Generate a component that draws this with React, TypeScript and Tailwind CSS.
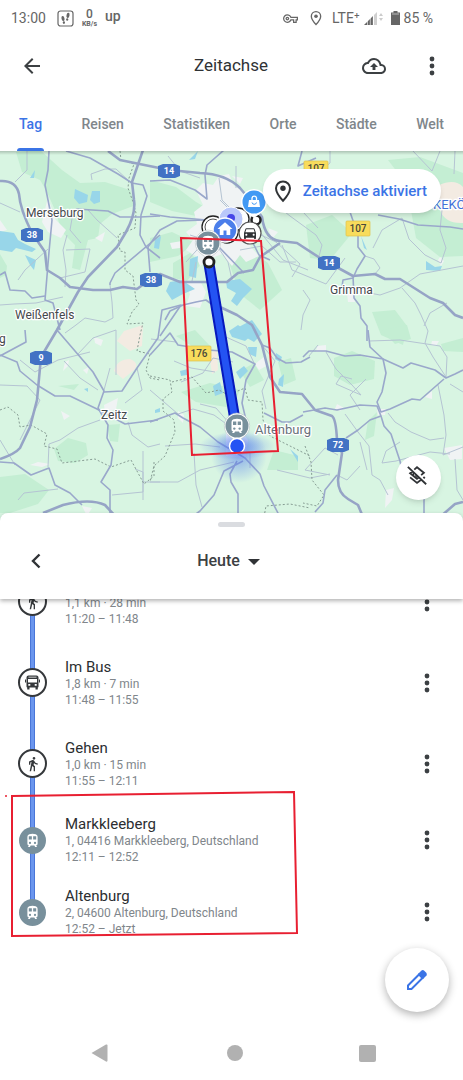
import React, { useState } from 'react';
import {
  MdArrowBack,
  MdDirectionsCar,
  MdDirectionsWalk,
  MdHome,
  MdOutlineBackup,
  MdOutlineVpnKey,
} from 'react-icons/md';

const tabs = ['Tag', 'Reisen', 'Statistiken', 'Orte', 'Städte', 'Welt'];

const entries = [
  { kind: 'walk', title: 'Gehen', detail: '1,1 km · 28 min', time: '11:20 – 11:48' },
  { kind: 'bus', title: 'Im Bus', detail: '1,8 km · 7 min', time: '11:48 – 11:55' },
  { kind: 'walk', title: 'Gehen', detail: '1,0 km · 15 min', time: '11:55 – 12:11' },
  { kind: 'place', title: 'Markkleeberg', detail: '1, 04416 Markkleeberg, Deutschland', time: '12:11 – 12:52' },
  { kind: 'place', title: 'Altenburg', detail: '2, 04600 Altenburg, Deutschland', time: '12:52 – Jetzt' },
];

const Dots = () => (
  <svg width="6" height="20" viewBox="0 0 6 20" fill="#3c4043">
    <circle cx="3" cy="3" r="2.4" />
    <circle cx="3" cy="10" r="2.4" />
    <circle cx="3" cy="17" r="2.4" />
  </svg>
);

const TrainIcon = (props: React.SVGProps<SVGSVGElement>) => (
  <svg viewBox="0 0 14 16" {...props}>
    <path d="M3.5 1.2Q7 .2 10.500 1.200Q12.500 2 12.500 4V11.500Q12.500 13.300 10.800 13.500L12 15H2L3.200 13.500Q1.500 13.300 1.500 11.500V4Q1.500 2 3.500 1.200Z" fill="#fff" />
    <path d="M3 3.500h3.300v3.500H3zM7.700 3.500H11v3.500H7.700z" fill="#78909c" />
    <circle cx="4.300" cy="10.600" r="1.200" fill="#78909c" />
    <circle cx="9.700" cy="10.600" r="1.200" fill="#78909c" />
    <path d="M5 13.500h4l.8 1.500H4.200z" fill="#78909c" />
  </svg>
);

const BusIcon = () => (
  <svg width="15" height="15" viewBox="0 0 15 15" fill="#35383b">
    <path d="M3.500 .5H11.500Q13.500 .5 13.500 2.500V11.500Q13.500 12.300 12.800 12.500V14.500H10.500V12.500H4.500V14.500H2.200V12.500Q1.500 12.300 1.500 11.500V2.500Q1.500 .5 3.500 .5Z" />
    <path d="M3.500 1.800H11.500V2.600H3.500ZM3 4H12V7.500H3ZM3.300 9H5.300V10.700H3.300ZM9.700 9H11.700V10.700H9.700Z" fill="#fff" />
    <path d="M0 4.500H1V7.500H0ZM14 4.500H15V7.500H14Z" />
  </svg>
);

const PlacePin = ({ size, color }: { size: number; color: string }) => (
  <svg width={size} height={size} viewBox="0 0 24 24" fill="none" stroke={color} strokeWidth="2">
    <path d="M12 2.500C8 2.500 5 5.500 5 9.300C5 14.300 12 21.800 12 21.800S19 14.300 19 9.300C19 5.500 16 2.500 12 2.500Z" />
    <circle cx="12" cy="9.300" r="2.700" fill={color} stroke="none" />
  </svg>
);

const StatusBar = () => (
  <div className="flex h-9 items-center justify-between pl-[11px] pr-[30px] text-sm text-[#666]">
    <div className="flex items-center">
      <span>13:00</span>
      <svg className="ml-[11px]" width="17" height="17" viewBox="0 0 17 17">
        <rect x="1" y="1" width="15" height="15" rx="2.500" fill="none" stroke="#666" strokeWidth="1.200" />
        <ellipse cx="6" cy="8.500" rx="1.500" ry="2.600" fill="#666" transform="rotate(-12 6 8.500)" />
        <ellipse cx="6.900" cy="12.600" rx="1.100" ry="1.300" fill="#666" />
        <ellipse cx="11" cy="5.400" rx="1.500" ry="2.600" fill="#666" transform="rotate(12 11 5.400)" />
        <ellipse cx="10.200" cy="9.500" rx="1.100" ry="1.300" fill="#666" />
      </svg>
      <span className="ml-2 flex flex-col items-center font-medium">
        <span className="text-xs leading-3">0</span>
        <span className="text-[7px] leading-2 font-bold">KB/s</span>
      </span>
      <span className="mb-1 ml-2 font-medium">up</span>
    </div>
    <div className="flex items-center">
      <MdOutlineVpnKey size={15} />
      <span className="ml-2.5">
        <PlacePin size={16} color="#666" />
      </span>
      <span className="ml-2">LTE⁺</span>
      <svg className="ml-1" width="19" height="16" viewBox="0 0 19 16">
        <path d="M0 15L9 6V15Z" fill="#666" />
        <path d="M10 15V5L13 2V15Z" fill="#d0d0d0" />
        <path d="M3.500 8V15M6.300 6V15M9.300 4V15" stroke="#fff" strokeWidth=".6" />
        <path d="M15 6L17 3L19 6ZM15 8L17 11L19 8Z" fill="#ccc" />
      </svg>
      <svg className="ml-2" width="9" height="16" viewBox="0 0 9 16">
        <path d="M2.500 1H6.500V2.500H9V15H0V2.500H2.500Z" fill="#666" />
        <path d="M1 3.500H8V4.500H1Z" fill="#bbb" />
      </svg>
      <span className="ml-1">85 %</span>
    </div>
  </div>
);

const woods = [
  'M16 152L40 150L62 170L80 183L105 182L130 190L136 205L112 214L100 224L98 238L88 240L80 270L72 268L75 245L62 232L55 210L46 190L40 180L22 172Z',
  'M150 180L176 187L196 202L212 211L196 216L172 211L150 202Z',
  'M150 238L172 232L195 243L178 256L150 262Z',
  'M173 263L190 253L201 264L187 281L173 278Z',
  'M306 225L332 215L352 233L330 260L310 258Z',
  'M388 160L420 157L463 173L463 201L425 183L404 181Z',
  'M410 205L441 210L463 218V256L440 257L416 238Z',
  'M372 312L395 310L407 326L403 345L381 335Z',
  'M334 358L352 351L375 361L374 379L350 385L334 376Z',
  'M382 330L407 325L411 339L395 344Z',
  'M54 449L68 438L86 443L88 455L75 463L58 461Z',
  'M0 477L25 474L49 490L38 504L10 513H0Z',
  'M107 425L120 424L118 442L110 441Z',
  'M274 450L298 456L298 470L267 470Z',
  'M181 392L210 383L240 390L232 408L196 402Z',
  'M240 371L254 363L264 380L250 387Z',
  'M228 260L250 250L268 263L282 290L260 310L240 294Z',
  'M368 421L377 412L374 436L365 440Z',
  'M441 344L463 338V352L443 351Z',
  'M0 254L7 266L6 275L0 278Z',
  'M268 195L285 176L300 184L292 202Z',
  'M58 386L79 384L74 390Z',
  'M176 336L195 330L210 346L198 350Z',
  'M278 362L291 358L296 380L284 385Z',
];

const lakes = [
  'M0 231L14 233L18 240L25 244L36 249L32 252L16 248L12 252L0 250Z',
  'M25 255L36 260L34 270L30 265Z',
  'M75 189L88 195L87 202L79 204L74 198Z',
  'M92 191L100 191V202L94 204L90 200Z',
  'M30 178L35 170L34 178Z',
  'M190 259L198 256L196 278L189 276Z',
  'M170 282L182 280L195 289L183 294L172 300L166 291Z',
  'M226 281L240 279L252 289L243 298L237 306L231 301L236 293L227 288Z',
  'M229 331L238 325L252 335L245 341L232 337Z',
  'M236 372L244 366L248 371L240 379Z',
  'M213 386L220 382L223 393L215 396Z',
  'M248 347L257 347L256 357L249 354Z',
  'M276 353L282 357L280 362L275 359Z',
  'M180 371L188 369L187 375L181 376Z',
  'M426 261L435 267L442 266L440 271L426 270Z',
  'M155 240L161 236L159 249L154 248Z',
  'M189 160L198 151L195 159Z',
  'M361 236L367 250L364 248Z',
  'M84 389L88 388L88 392Z',
  'M155 410L160 408V412L155 413Z',
  'M290 449L298 456L298 462Z',
  'M279 379L284 374L283 387L278 385Z',
  'M233 330L252 320L262 334L254 342Z',
];

const towns = [
  'M196 190L203 183L213 185L219 176L229 174L234 186L243 190L246 203L258 214L252 226L258 236L250 246L259 256L246 262L240 255L232 266L222 254L212 258L200 266L196 256L186 250L193 240L186 232L197 224L194 212L203 205Z',
  'M184 283L200 281L206 292L200 308L186 306L190 294Z',
  'M232 176L243 178L240 184ZM170 243L182 241L180 248L172 249ZM268 228L278 232L272 239Z',
  'M48 197L55 219L66 230L61 238L48 232L42 222Z',
  'M95 238L105 232L102 242Z',
  'M226 432L240 430L248 440L245 458L226 456Z',
  'M347 293L353 290L355 302L348 302Z',
  'M61 411L70 416L64 420Z',
  'M104 405L118 398L116 409L105 413Z',
  'M94 337L103 340L101 346L95 343Z',
  'M317 346L326 345V351L316 352Z',
  'M337 404L344 408L340 411L335 409Z',
  'M377 409L386 409L385 415L378 415Z',
  'M425 397L432 391L432 399Z',
  'M444 448L462 445V459L450 460Z',
  'M386 490L394 488L392 500L385 508Z',
  'M82 506L92 508L87 516Z',
  'M65 362L69 360L68 366L63 371Z',
  'M83 370L89 367L87 374Z',
  'M30 465L38 462L50 464L42 467Z',
  'M255 364L265 356L268 365L259 370Z',
  'M178 411L184 415L183 423L178 418Z',
  'M0 220L7 230L0 232Z',
  'M432 341L439 341L436 346L431 345Z',
  'M440 257L444 261L441 266L438 260Z',
];

const motorways = [
  'M0 181Q16 180 19 194Q20 209 32 233L45 252L47 270L60 278L70 287L93 290L110 290L123 287L137 289L148 281L160 274L180 282L227 282L238 273L253 270L260 257L280 243',
  'M108 151L120 160L169 170L200 173Q226 174 240 188L250 200L262 217Q265 240 280 241L297 243L320 258L353 276L375 274L385 279L400 279L430 298L443 303L455 315L463 318',
  'M143 150L132 182L134 200Q136 214 126 232L117 247L88 277L78 292L57 330L41 357L37 400L30 427L20 448Q15 454 0 459',
  'M43 513L63 505Q90 498 105 505L116 517',
  'M220 307L237 315L252 325L262 345L270 377L280 392L302 394L315 410L332 416Q336 419 337 440L342 453L338 480Q338 493 348 499L358 505L363 517',
  'M440 517L455 504L463 502',
];

const mainRoads = [
  'M49 151L48 170L45 185L52 220L49 252L45 300L53 303L60 330',
  'M66 151L90 158L118 174L132 183L143 185L147 196L141 215L140 235L146 247L160 258',
  'M76 209L108 211L120 217L140 217L160 216',
  'M0 275L5 272L10 290L25 291L32 298L45 296',
  'M160 235L115 273L110 283L110 285',
  'M57 330L93 372L104 391L98 408L108 425L107 438L113 450L111 465L101 482L110 490V517',
  'M0 356L26 342L25 330M0 355L17 362L20 371L37 385L55 396L70 396L97 409L125 424L158 420',
  'M104 392L122 391L137 368L158 338L162 310L181 305L160 336',
  'M0 462L14 463L31 475L49 468L55 485L70 493L82 505',
  'M150 422L175 413L183 418L200 427L218 442L245 458L260 474L264 486L280 517',
  'M150 355L170 333L178 345L209 350L232 352L255 364L246 380L242 403L246 420',
  'M150 181L170 180L195 190L207 199L205 175L207 165L224 150',
  'M150 214L170 217L207 220',
  'M251 200L278 190M302 151L298 166L316 158',
  'M303 357L309 351L326 351L345 356L360 355L383 359L403 368L411 363L435 370L446 378L455 374L463 370',
  'M368 330L370 347L383 359L386 373L382 392L377 402L381 412L390 409L412 399L420 400L444 379',
  'M303 412L325 408L337 410L360 405L377 406L381 416L384 426L391 434L400 461L406 490L424 495V517',
  'M381 416L370 420L358 430L346 438M315 512L323 503L325 490L337 475',
  'M303 415L290 422L282 422L264 413',
  'M350 212L358 235L358 247L365 256L357 269L353 278L343 280L342 287M353 276L354 298L360 306L361 318L367 326V341',
  'M378 215L399 219L418 225L450 227L463 229',
  'M237 461L230 474L231 482L238 494L238 517M243 461L224 471L214 495L200 511L192 517',
  'M262 345L270 348L277 358L286 363L301 362L310 357',
  'M207 220L226 216L249 235L259 255L270 260M207 220L218 246L244 273M165 320L170 311L183 305L196 302L206 300L222 312',
  'M150 272L148 247L160 230L177 221L205 220',
];

const smallRoads = [
  'M0 203L20 212M27 151L27 170L15 182M92 180L91 174L105 169L116 169L130 182',
  'M67 235L63 250L66 270L65 287M66 250L90 249L85 272L60 278M81 243L70 230L73 213',
  'M88 210L97 220L117 238M48 249L25 270L18 280M110 285L112 302L113 318L105 322L85 318L76 325L65 333',
  'M0 305L14 304L36 303L63 297M20 360L35 372L58 360L90 352M0 385L27 386L40 400L20 440',
  'M78 354L93 338L116 330L116 375M110 368L104 390M64 361L80 378L98 390M100 420L78 428L60 440L49 444L48 467',
  'M128 422L132 435L148 447L160 444M137 368L142 390L125 403M0 440L15 465M18 500L24 493L58 489M112 495L143 492L143 472L135 469M143 482L160 482',
  'M143 451L143 500M220 200L250 230L276 242L300 264L292 277M260 232L283 260L308 270M200 178L180 171L168 156M236 188L236 166',
  'M265 196L290 216L316 235L322 245L318 260M282 245L292 270L326 284L345 258M303 290L310 300L303 315L301 330',
  'M373 248L382 230L402 218L409 239L425 255L441 263L446 248L440 230L442 210M375 274L380 268L374 259L365 256M354 290L380 295L400 288L420 274L463 266',
  'M402 288L415 303L421 315L428 331L425 343L433 357L446 377M447 303L430 313L424 326M318 345L309 356M326 352L336 369L352 385L361 395L336 384M366 379L350 395L360 410M369 341L400 340L440 346L447 357L446 377M352 379L341 376L336 384',
  'M438 385L444 415L446 435L443 455L463 447M388 413L395 422L411 432L430 440L444 438M455 459L457 490L463 500M345 414L358 432L369 446L372 475L380 480L388 495',
  'M400 442L386 451L382 463L396 461L430 452L450 454M360 466L347 480L337 475M367 470L360 442M338 455L325 448L305 470L330 475',
  'M150 390L178 414L193 409L214 415L236 431M165 446L195 444L220 447M194 453L196 485L202 507M181 382L203 373L213 358L233 362M250 452L250 468M277 470L310 478L330 474',
  'M255 365L246 346L226 337M176 342L151 339M262 345L275 361L262 391L266 409M174 361L191 368L215 372M200 404L216 408L236 431',
  'M412 150L432 171L440 151M455 151L454 174M316 175L330 163L330 151M463 392L450 384M303 212L318 228M150 482L178 482L200 470L234 462',
  'M190 235L215 243L228 262L232 280M219 178L222 200L232 210M186 262L206 240M240 250L262 246L280 262L296 262M196 262L192 281',
];

const borders = [
  'M120 151L121 160L134 164L129 178L128 188L133 202L136 213L135 228L118 235L120 251L125 252L125 270L133 276L136 300L139 304L132 312L127 324L143 323L140 335L137 351L150 354L146 370L150 378L160 380',
  'M0 410L8 407L18 415L20 427L31 425L47 434L44 446L57 449L62 463L95 459L111 467L131 460L144 484L154 476V461',
  'M150 376L170 380L172 392L163 399V411L174 420L175 432L165 456L154 466L150 482',
  'M172 382L192 377L206 393L219 390L228 395L245 388L248 400L262 402L263 420L270 436L296 449L310 456',
  'M305 446L311 462L312 480L324 495L317 506L303 503M264 517L266 506L290 504L310 508',
];

const MotorwaySign = ({ x, y, label }: { x: number; y: number; label: string }) => (
  <g transform={`translate(${x} ${y})`}>
    <path d="M-6 -7H6L11 -5V5L6 7H-6L-11 5V-5Z" fill="#4272c4" />
    <text y="3" textAnchor="middle" fontSize="9" fontWeight="700" fill="#fff">{label}</text>
  </g>
);

const RoadSign = ({ x, y, label }: { x: number; y: number; label: string }) => (
  <g transform={`translate(${x} ${y})`}>
    <rect x="-12" y="-7" width="24" height="15" rx="1" fill="#f8dc5c" stroke="#e0c24c" strokeWidth=".7" />
    <text y="4" textAnchor="middle" fontSize="10" fontWeight="500" fill="#4a4a3a">{label}</text>
  </g>
);

const StationPin = ({ x, y }: { x: number; y: number }) => (
  <g transform={`translate(${x} ${y})`}>
    <path d="M0 -13A13 13 0 0 1 8 10L0 16L-8 10A13 13 0 0 1 0 -13Z" fill="#fff" stroke="#b8c4c4" strokeWidth=".6" />
    <circle r="11.500" fill="#78909c" />
    <TrainIcon x="-7" y="-8" width="14" height="16" />
  </g>
);

const TimelineMap = () => (
  <svg
    className="block h-full w-full"
    viewBox="0 151 463 376"
    preserveAspectRatio="xMidYMin slice"
    fontFamily='Roboto, "Liberation Sans", sans-serif'
    role="img"
    aria-label="Karte"
  >
    <defs>
      <radialGradient id="beam">
        <stop offset="0" stopColor="#4a74f0" stopOpacity=".55" />
        <stop offset="1" stopColor="#4a74f0" stopOpacity="0" />
      </radialGradient>
    </defs>
    <rect y="151" width="463" height="376" fill="#d8f5e2" />
    <g fill="#c4eed3">{woods.map((d) => <path key={d} d={d} />)}</g>
    <g fill="#f3ebe2">
      <path d="M117 341L124 331L143 325L142 346L130 351Z" />
      <path d="M114 371Q117 359 130 359Q140 363 134 370L123 379Z" />
      <path d="M439 185Q455 178 463 187V223Q445 224 440 210Z" />
      <path d="M209 353L217 350L218 370L212 374Z" />
    </g>
    <g fill="#f0f3f4">{towns.map((d) => <path key={d} d={d} />)}</g>
    <g fill="#98d6e9">{lakes.map((d) => <path key={d} d={d} />)}</g>
    <g fill="none" strokeLinejoin="round">
      <g stroke="#b5c4d3" strokeWidth="1">{smallRoads.map((d) => <path key={d} d={d} />)}</g>
      <g stroke="#869c93" strokeWidth="1" strokeDasharray="2 2">{borders.map((d) => <path key={d} d={d} />)}</g>
      <g stroke="#9aa8cb" strokeWidth="1.600">{mainRoads.map((d) => <path key={d} d={d} />)}</g>
      <g stroke="#96a4c6" strokeWidth="2.600">{motorways.map((d) => <path key={d} d={d} />)}</g>
    </g>

    <MotorwaySign x={32} y={235} label="38" />
    <MotorwaySign x={151} y={280} label="38" />
    <MotorwaySign x={169} y={171} label="14" />
    <MotorwaySign x={329} y={263} label="14" />
    <MotorwaySign x={41} y={358} label="9" />
    <MotorwaySign x={338} y={445} label="72" />
    <RoadSign x={316} y={168} label="107" />
    <RoadSign x={358} y={228} label="107" />
    <RoadSign x={199} y={353} label="176" />

    <g fontSize="12" fill="#44484c" stroke="#fff" strokeWidth="2.500" strokeLinejoin="round" paintOrder="stroke">
      <text x="26" y="217">Merseburg</text>
      <text x="15" y="319">Weißenfels</text>
      <text x="-1" y="343">g</text>
      <text x="101" y="419">Zeitz</text>
      <text x="330" y="294">Grimma</text>
      <text x="255" y="434" fontSize="13" fill="#68717a">Altenburg</text>
      <text x="433" y="209" fontSize="13" fill="#4272d8">KEKÖ</text>
    </g>

    {/* Blickrichtung */}
    <ellipse cx="237" cy="446" rx="38" ry="14" fill="url(#beam)" />
    <circle cx="239" cy="455" r="28" fill="url(#beam)" />

    {/* Strecke Markkleeberg - Altenburg */}
    <path d="M209 264L237 432" stroke="#0719bd" strokeWidth="11" />
    <path d="M209 264L237 432" stroke="#2453f3" strokeWidth="7" />

    {/* Stecknadeln rund um Leipzig */}
    <g fill="#fff" stroke="#222" strokeWidth="1.300">
      <circle cx="213" cy="227" r="11" />
      <circle cx="238" cy="219" r="11" />
      <circle cx="256" cy="220" r="4.500" strokeWidth="2.500" />
      <circle cx="227" cy="232" r="11" />
      <circle cx="250" cy="233" r="11" stroke="#555" strokeWidth="1.200" />
    </g>
    <circle cx="213" cy="227" r="8" fill="none" stroke="#222" strokeWidth=".8" />
    <MdDirectionsCar x={242} y={225} size={16} color="#303336" />
    <circle cx="231" cy="219" r="12" fill="#b9c8fa" stroke="#fff" strokeWidth="1" />
    <circle cx="231" cy="218" r="4" fill="#4546e8" />
    <circle cx="225" cy="230" r="12" fill="#4b7eea" stroke="#fff" strokeWidth="1.500" />
    <MdHome x={216} y={220} size={18} color="#fff" />
    <path d="M254 189A13 13 0 0 1 261 213L254 218L247 213A13 13 0 0 1 254 189Z" fill="#fff" />
    <circle cx="254" cy="202" r="11.500" fill="#4299f4" />
    <path d="M249 200H259L260 207H248Z" fill="#fff" />
    <path d="M252 200V198A2.300 2.300 0 0 1 256.500 198V200" fill="none" stroke="#fff" strokeWidth="1.300" />
    <path d="M252 202.500A2.300 2.300 0 0 0 256.500 202.500" fill="none" stroke="#4299f4" />
    <StationPin x={208} y={243} />
    <circle cx="209" cy="262" r="5" fill="#fff" stroke="#222" strokeWidth="2.800" />
    <StationPin x={237} y={426} />
    <circle cx="237" cy="446" r="7.500" fill="#2453f3" stroke="#fff" strokeWidth="1.500" />

    <path d="M181 238L261 241L278 451L192 455Z" fill="none" stroke="#e81f31" strokeWidth="2" />
  </svg>
);

const EntryIcon = ({ kind }: { kind: string }) => {
  if (kind === 'place') {
    return (
      <span className="relative flex size-[27px] items-center justify-center rounded-full bg-[#78909c]">
        <TrainIcon width="13" height="15" />
      </span>
    );
  }
  return (
    <span className="relative flex size-[29px] items-center justify-center rounded-full border-2 border-[#35383b] bg-white text-[#35383b]">
      {kind === 'bus' ? <BusIcon /> : <MdDirectionsWalk size={16} />}
    </span>
  );
};

const Timeline = () => (
  <ul className="-mt-[38px]">
    {entries.map((entry, i) => (
      <li
        key={entry.time}
        className={`flex items-center pl-[18px] pr-6 ${entry.kind === 'place' ? 'h-[72px]' : 'h-[81px]'}`}
      >
        <div className="relative flex w-[29px] items-center justify-center self-stretch">
          <span
            className={`absolute top-0 w-[5px] border-x border-[#4a76d8] bg-[#6b96ee] ${
              i === entries.length - 1 ? 'bottom-1/2' : 'bottom-0'
            }`}
          />
          <EntryIcon kind={entry.kind} />
        </div>
        <div className="ml-[18px] flex-1 text-xs leading-4 text-[#80868b]">
          <h3 className="text-[15px] leading-[18px] text-[#2b2e31]">{entry.title}</h3>
          <p>{entry.detail}</p>
          <p>{entry.time}</p>
        </div>
        <button type="button" aria-label="Weitere Optionen" className="flex w-6 justify-center">
          <Dots />
        </button>
      </li>
    ))}
  </ul>
);

const App = () => {
  const [active, setActive] = useState('Tag');

  return (
    <div className="flex min-h-screen flex-col overflow-hidden bg-white font-[Roboto,'Liberation_Sans',sans-serif] text-[#3c4043]">
      <StatusBar />

      <header className="flex h-[60px] items-center justify-between pl-5 pr-[19px]">
        <button type="button" aria-label="Zurück" className="flex w-20">
          <MdArrowBack size={24} />
        </button>
        <h1 className="text-[17px] text-[#2f3235]">Zeitachse</h1>
        <div className="flex items-center gap-[34px]">
          <button type="button" aria-label="Sicherung">
            <MdOutlineBackup size={24} />
          </button>
          <button type="button" aria-label="Menü" className="flex w-6 justify-center">
            <Dots />
          </button>
        </div>
      </header>

      <nav className="flex h-[55px] justify-between px-[17px]">
        {tabs.map((tab) => (
          <button
            type="button"
            key={tab}
            onClick={() => setActive(tab)}
            className={`relative px-0.5 text-sm font-medium ${active === tab ? 'text-[#3b74e6]' : 'text-[#80868b]'}`}
          >
            {tab}
            {active === tab && <span className="absolute inset-x-0 bottom-0 h-[3px] rounded-t-sm bg-[#3b74e6]" />}
          </button>
        ))}
      </nav>

      <div className="relative h-[376px] overflow-hidden">
        <TimelineMap />
        <div className="absolute inset-x-0 top-0 h-1 bg-linear-to-b from-black/20 to-transparent" />
        <button
          type="button"
          className="absolute top-[18px] right-[22px] flex h-11 items-center gap-2 rounded-full bg-white pr-3.5 pl-2 text-[15px] font-medium text-[#3b74e6] shadow-md"
        >
          <PlacePin size={24} color="#303336" />
          Zeitachse aktiviert
        </button>
        <button
          type="button"
          aria-label="Ebenen ausblenden"
          className="absolute right-[22px] bottom-[27px] flex size-[45px] items-center justify-center rounded-full bg-white shadow-md"
        >
          <svg className="mb-1 mr-1" width="22" height="22" viewBox="0 0 24 24" fill="none" stroke="#303336" strokeWidth="2">
            <path d="M9 5L12 2.500L19.500 8.500L16.500 11M7 7L4.500 9L12 15L14 13.500M4.500 13.500L12 19.500L16.500 16M19 13L20.500 14.500M2 2L22 21" />
            <path d="M8 7.500V11M11 10.500V14" strokeWidth="1.500" />
          </svg>
        </button>
      </div>

      <section className="relative z-10 -mt-3.5 h-[86px] rounded-t-lg bg-white shadow-[0_2px_4px_rgba(0,0,0,0.3)]">
        <div className="flex h-[22px] items-center justify-center">
          <span className="h-[5px] w-[27px] rounded-full bg-[#dadce0]" />
        </div>
        <div className="flex h-[52px] items-center justify-between pr-[30px] pl-6">
          <button type="button" aria-label="Vorheriger Tag" className="flex w-6 justify-center">
            <svg width="10" height="16" viewBox="0 0 10 16" fill="none" stroke="#303336" strokeWidth="2.400">
              <path d="M8.500 1.500L2 8L8.500 14.500" />
            </svg>
          </button>
          <button type="button" className="flex items-center gap-2 text-base font-medium">
            Heute
            <svg width="12" height="7" viewBox="0 0 12 7" fill="#303336">
              <path d="M0 1H12L6 7Z" />
            </svg>
          </button>
          <span className="w-6" />
        </div>
      </section>

      <main className="relative flex-1 overflow-hidden">
        <Timeline />
        <svg className="pointer-events-none absolute top-[190px] left-0" width="302" height="150" viewBox="0 0 302 150">
          <path d="M12 7L294 3L297 144L12 147Z" fill="none" stroke="#e81f31" strokeWidth="2" />
          <circle cx="6" cy="7" r="1" fill="#e81f31" />
        </svg>
        <button
          type="button"
          aria-label="Tag bearbeiten"
          className="absolute right-3.5 bottom-3.5 flex size-16 items-center justify-center rounded-full bg-white shadow-[0_3px_8px_rgba(0,0,0,0.3)]"
        >
          <svg width="22" height="22" viewBox="0 0 22 22">
            <path d="M2 16.500V20H5.500L16.500 9L13 5.500Z" fill="none" stroke="#3b74e6" strokeWidth="2" />
            <path d="M12 5L15.500 1.500Q17 .5 18.500 2L20 3.500Q21.500 5 20.500 6.500L17 10Z" fill="#3b74e6" />
          </svg>
        </button>
      </main>

      <footer className="flex h-[54px] items-center justify-between px-[87px]">
        <button type="button" aria-label="Zurück" className="flex w-6 justify-center">
          <svg width="17" height="18" viewBox="0 0 17 18" fill="#b1b1b1">
            <path d="M.5 9L15 .5Q16.500 0 16.500 1.500V16.500Q16.500 18 15 17.500Z" />
          </svg>
        </button>
        <button type="button" aria-label="Startbildschirm" className="size-4 rounded-full bg-[#b1b1b1]" />
        <button type="button" aria-label="Übersicht" className="size-[17px] rounded-xs bg-[#b1b1b1]" />
      </footer>
    </div>
  );
};

export default App;
